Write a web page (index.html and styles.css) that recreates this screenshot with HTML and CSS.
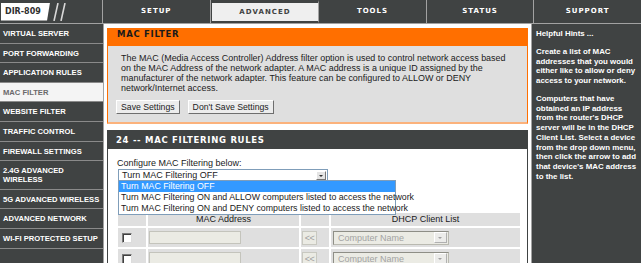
FILE: index.html
```html
<!DOCTYPE html>
<html lang="en">
<head>
    <meta charset="UTF-8">
    <title>D-Link DIR-809 - MAC Filter</title>
    <link rel="stylesheet" href="styles.css">
</head>
<body>

<div class="topbar">
    <div class="logo">
        <span class="model">DIR-809</span>
        <svg class="slashes" width="14" height="18" viewBox="0 0 14 18">
            <path d="M5 0 L1 18 M12 0 L8 18" stroke="#d8d8d8" stroke-width="1.6" fill="none"/>
        </svg>
    </div>
    <ul class="tabs">
        <li>SETUP</li>
        <li class="active">ADVANCED</li>
        <li>TOOLS</li>
        <li>STATUS</li>
        <li>SUPPORT</li>
    </ul>
</div>

<div class="layout">
    <!-- left menu -->
    <ul class="sidenav">
        <li>VIRTUAL SERVER</li>
        <li>PORT FORWARDING</li>
        <li>APPLICATION RULES</li>
        <li class="current">MAC FILTER</li>
        <li>WEBSITE FILTER</li>
        <li>TRAFFIC CONTROL</li>
        <li>FIREWALL SETTINGS</li>
        <li>2.4G ADVANCED<br>WIRELESS</li>
        <li>5G ADVANCED WIRELESS</li>
        <li>ADVANCED NETWORK</li>
        <li>WI-FI PROTECTED SETUP</li>
    </ul>

    <div class="main">
        <div class="box-orange">
            <h2>MAC FILTER</h2>
            <div class="box-body">
                <p>The MAC (Media Access Controller) Address filter option is used to control network access based<br>
                on the MAC Address of the network adapter. A MAC address is a unique ID assigned by the<br>
                manufacturer of the network adapter. This feature can be configured to ALLOW or DENY<br>
                network/Internet access.</p>
                <div class="buttons">
                    <span class="btn">Save Settings</span>
                    <span class="btn">Don't Save Settings</span>
                </div>
            </div>
        </div>

        <div class="box-dark">
            <h2>24 -- MAC FILTERING RULES</h2>
            <div class="rules">
                <div class="label">Configure MAC Filtering below:</div>
                <div class="select-wrap">
                    <div class="select">
                        <span>Turn MAC Filtering OFF</span>
                        <span class="arrow"></span>
                    </div>
                    <ul class="dropdown">
                        <li class="selected">Turn MAC Filtering OFF</li>
                        <li>Turn MAC Filtering ON and ALLOW computers listed to access the network</li>
                        <li>Turn MAC Filtering ON and DENY computers listed to access the network</li>
                    </ul>
                </div>
                <div class="spacer"></div>
                <div class="grid">
                    <div class="th"></div>
                    <div class="th">MAC Address</div>
                    <div class="th"></div>
                    <div class="th">DHCP Client List</div>

                    <div class="td"><span class="check"></span></div>
                    <div class="td"><span class="field"></span></div>
                    <div class="td"><span class="copy">&lt;&lt;</span></div>
                    <div class="td"><span class="combo">Computer Name<span class="arrow"></span></span></div>

                    <div class="td"><span class="check"></span></div>
                    <div class="td"><span class="field"></span></div>
                    <div class="td"><span class="copy">&lt;&lt;</span></div>
                    <div class="td"><span class="combo">Computer Name<span class="arrow"></span></span></div>
                </div>
            </div>
        </div>
    </div>

    <!-- hints -->
    <div class="hints">
        <h3>Helpful Hints ...</h3>
        <p>Create a list of MAC<br>addresses that you would<br>either like to allow or deny<br>access to your network.</p>
        <p>Computers that have<br>obtained an IP address<br>from the router's DHCP<br>server will be in the DHCP<br>Client List. Select a device<br>from the drop down menu,<br>then click the arrow to add<br>that device's MAC address<br>to the list.</p>
    </div>
</div>

</body>
</html>
```

FILE: styles.css
```css
body {
    margin: 0;
    background: #404343;
    font-family: "Liberation Sans", Arial, sans-serif;
    overflow: hidden;
}
ul {
    margin: 0;
    padding: 0;
    list-style: none;
}

/* top bar */
.topbar {
    display: flex;
    height: 23px;
    border-bottom: 1px solid #a2a2a2;
}
.logo {
    width: 103px;
    border-right: 1px solid #a2a2a2;
    display: flex;
    align-items: center;
    padding-left: 1px;
    box-sizing: border-box;
}
.model {
    width: 49px;
    height: 18px;
    background: #fff;
    color: #303030;
    font: bold 8px "DejaVu Sans", Verdana, sans-serif;
    line-height: 18px;
    padding-left: 4px;
    box-sizing: border-box;
    clip-path: polygon(0 0, 100% 0, 94% 100%, 0 100%);
}
.slashes {
    margin-left: 3px;
}
.tabs {
    display: flex;
    flex: 1;
}
.tabs li {
    flex: 1;
    border-right: 1px solid #a2a2a2;
    color: #fff;
    font: bold 7px "DejaVu Sans", Verdana, sans-serif;
    letter-spacing: 1px;
    text-align: center;
    line-height: 23px;
}
.tabs li:last-child {
    border-right: none;
}
.tabs li.active {
    background: #efefef;
    color: #404343;
    border-top: 3px solid #404343;
    border-bottom: 2px solid #404343;
    border-left: 1px solid #404343;
    line-height: 18px;
}

/* layout */
.layout {
    display: flex;
    height: 239px;
}
.sidenav {
    width: 103px;
    border-right: 1px solid #a2a2a2;
}
.sidenav li {
    padding: 5px 0 4.6px 3px;
    line-height: 9px;
    border-bottom: 1px solid #8a8a8a;
    color: #fff;
    font-size: 7.6px;
    font-weight: bold;
}
.sidenav li.current {
    background: #f4f4f4;
    color: #6a6a6a;
}

.main {
    width: 427px;
    background: #fff;
    padding: 4px 3px;
    box-sizing: border-box;
}

/* orange box */
.box-orange {
    border: 1px solid #ff6f00;
    border-bottom: 2px solid #fbb27c;
}
.box-orange h2,
.box-dark h2 {
    margin: 0;
    height: 17px;
    line-height: 17px;
    padding-left: 9px;
    font: bold 8.5px "DejaVu Sans", Verdana, sans-serif;
    letter-spacing: 0.7px;
}
.box-orange h2 {
    background: #ff6f00;
    color: #1a1a1a;
}
.box-body {
    background: #dfdfdf;
    padding: 7px 10px 8px 13px;
}
.box-body p {
    margin: 0;
    font-size: 8.95px;
    line-height: 10px;
    color: #1a1a1a;
    white-space: nowrap;
}
.buttons {
    display: flex;
    gap: 8px;
    margin-top: 7px;
    margin-left: -5px;
}
.btn {
    height: 14px;
    line-height: 13px;
    padding: 0 4px;
    font-size: 8.7px;
    color: #222;
    background: #ececec;
    border: 1px solid;
    border-color: #fff #6e6e6e #6e6e6e #fff;
    box-sizing: border-box;
}

/* rules box */
.box-dark {
    margin-top: 6px;
    border: 1px solid #404343;
    border-bottom: none;
    height: 200px;
}
.box-dark h2 {
    background: #404343;
    color: #fff;
    height: 18px;
    line-height: 18px;
    padding-left: 8px;
}
.rules {
    padding: 9px 0 0 10px;
    font-size: 9px;
    color: #1a1a1a;
}
.label {
    line-height: 10px;
    margin-left: -1px;
}
.select-wrap {
    position: relative;
    margin-top: 1px;
}
.select {
    width: 210px;
    height: 12px;
    border: 1px solid #7f9db9;
    box-sizing: border-box;
    display: flex;
    justify-content: space-between;
    align-items: center;
    padding-left: 3px;
    line-height: 10px;
}
.arrow {
    width: 10px;
    height: 9px;
    background: #e4e4e4;
    border: 1px solid;
    border-color: #fff #777 #777 #fff;
    box-sizing: border-box;
    margin-right: 1px;
    position: relative;
}
.arrow::after {
    content: "";
    position: absolute;
    left: 2px;
    top: 3px;
    border-left: 2px solid transparent;
    border-right: 2px solid transparent;
    border-top: 2px solid #333;
}
.dropdown {
    position: absolute;
    top: 11px;
    left: 0;
    width: 276px;
    background: #fff;
    border: 1px solid #7f9db9;
    z-index: 2;
}
.dropdown li {
    height: 11px;
    line-height: 11px;
    padding-left: 2px;
    font-size: 8.8px;
    white-space: nowrap;
}
.dropdown li.selected {
    background: #3399ff;
    color: #fff;
}
.spacer {
    height: 30px;
}

/* mac table */
.grid {
    display: grid;
    grid-template-columns: 28px 151px 28px 189px;
    grid-template-rows: 13px 19px 19px;
    gap: 2px;
    margin-left: -2px;
    padding: 2px;
}
.th {
    background: #dfdfdf;
    text-align: center;
    line-height: 13px;
}
.td {
    background: #dfdfdf;
    display: flex;
    align-items: center;
}
.check {
    width: 10px;
    height: 10px;
    margin-left: 4px;
    background: #fff;
    border: 1px solid;
    border-color: #7a7a7a #dcdcdc #dcdcdc #7a7a7a;
    box-shadow: inset 1px 1px 0 #404040;
    box-sizing: border-box;
}
.field {
    width: 92px;
    height: 13px;
    margin-left: 1px;
    background: #ebebe4;
    border: 1px solid #c4c4bc;
    box-sizing: border-box;
}
.copy {
    width: 15px;
    height: 14px;
    margin-left: 1px;
    background: #ebebe4;
    border: 1px solid #c8c8c0;
    box-sizing: border-box;
    color: #a0a0a0;
    font-size: 9px;
    line-height: 12px;
    text-align: center;
    letter-spacing: -0.5px;
}
.combo {
    width: 116px;
    height: 14px;
    margin-left: 2px;
    background: #ebebe4;
    border: 1px solid #b9b9b0;
    border-top-color: #8e8e86;
    border-left-color: #8e8e86;
    box-sizing: border-box;
    display: flex;
    justify-content: space-between;
    align-items: center;
    padding-left: 4px;
    color: #a3a3a3;
}
.combo .arrow {
    width: 13px;
    height: 11px;
    background: #ececea;
    border-color: #fff #b0b0b0 #b0b0b0 #fff;
}
.combo .arrow::after {
    left: 3px;
    top: 4px;
    border-top-color: #a0a0a0;
}

/* hints */
.hints {
    flex: 1;
    border-left: 1px solid #a2a2a2;
    padding: 5px 4px 0 4px;
    color: #fff;
    font-size: 7.9px;
    font-weight: bold;
    line-height: 9.75px;
}
.hints h3 {
    margin: 0 0 8px;
    font-size: 7.9px;
}
.hints p {
    margin: 0 0 8px;
    white-space: nowrap;
}
```
